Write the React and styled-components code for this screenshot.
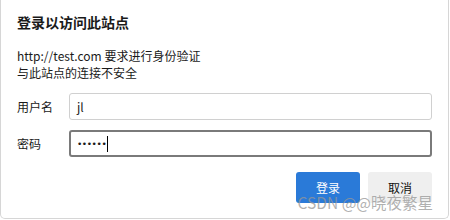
import React from "react";
import styled, { createGlobalStyle } from "styled-components";

const Global = createGlobalStyle`
  html, body {
    margin: 0;
    padding: 0;
    background: #fff;
  }
  body {
    font-family: "Microsoft YaHei", "Noto Sans CJK SC", "Noto Sans", sans-serif;
    color: #1a1a1a;
  }
`;

const Dialog = styled.div`
  position: relative;
  box-sizing: border-box;
  width: 449px;
  height: 219px;
  border: 1px solid #d6d6d6;
  border-top: none;
  border-radius: 0 0 5px 5px;
  padding: 11px 16px 0 16px;
`;

const Title = styled.h1`
  margin: 0;
  font-size: 14px;
  font-weight: 700;
  line-height: 22px;
`;

const Info = styled.p`
  margin: 14px 0 0 0;
  font-size: 12px;
  line-height: 17px;
`;

const Form = styled.div`
  margin-top: 12px;
  display: flex;
  flex-direction: column;
  gap: 10px;
`;

const Row = styled.div`
  display: flex;
  align-items: center;
`;

const Label = styled.label`
  width: 52px;
  font-size: 12px;
`;

const Field = styled.div`
  box-sizing: border-box;
  width: 364px;
  height: 27px;
  border: ${(p) => (p.focused ? "2px solid #7a7a7a" : "1px solid #d0d0d0")};
  border-radius: 3px;
  padding-left: ${(p) => (p.focused ? "6px" : "7px")};
  display: flex;
  align-items: center;
  font-size: 12px;
  color: #1a1a1a;
`;

const Dots = styled.span`
  font-family: "DejaVu Sans", sans-serif;
  font-size: 9px;
  letter-spacing: -0.4px;
  margin-top: 1px;
`;

const Caret = styled.span`
  display: inline-block;
  width: 1px;
  height: 16px;
  background: #000;
  margin-left: 1px;
`;

const Actions = styled.div`
  display: flex;
  justify-content: flex-end;
  gap: 8px;
  margin-top: 15px;
`;

const Button = styled.button`
  width: 64px;
  height: 31px;
  border: none;
  border-radius: 3px;
  font-family: inherit;
  font-size: 12px;
  background: ${(p) => (p.primary ? "#2a7ad8" : "#efefef")};
  color: ${(p) => (p.primary ? "#fff" : "#111")};
`;

const Watermark = styled.div`
  position: absolute;
  right: 15px;
  bottom: 5px;
  font-size: 15.5px;
  color: rgba(150, 150, 150, 0.75);
  white-space: nowrap;
`;

export default function App() {
  return (
    <>
      <Global />
      <Dialog>
        <Title>登录以访问此站点</Title>
        <Info>
          http://test.com 要求进行身份验证
          <br />
          与此站点的连接不安全
        </Info>
        <Form>
          <Row>
            <Label>用户名</Label>
            <Field>jl</Field>
          </Row>
          <Row>
            <Label>密码</Label>
            <Field focused>
              <Dots>••••••</Dots>
              <Caret />
            </Field>
          </Row>
        </Form>
        <Actions>
          <Button primary>登录</Button>
          <Button>取消</Button>
        </Actions>
        <Watermark>CSDN @@晓夜繁星</Watermark>
      </Dialog>
    </>
  );
}
